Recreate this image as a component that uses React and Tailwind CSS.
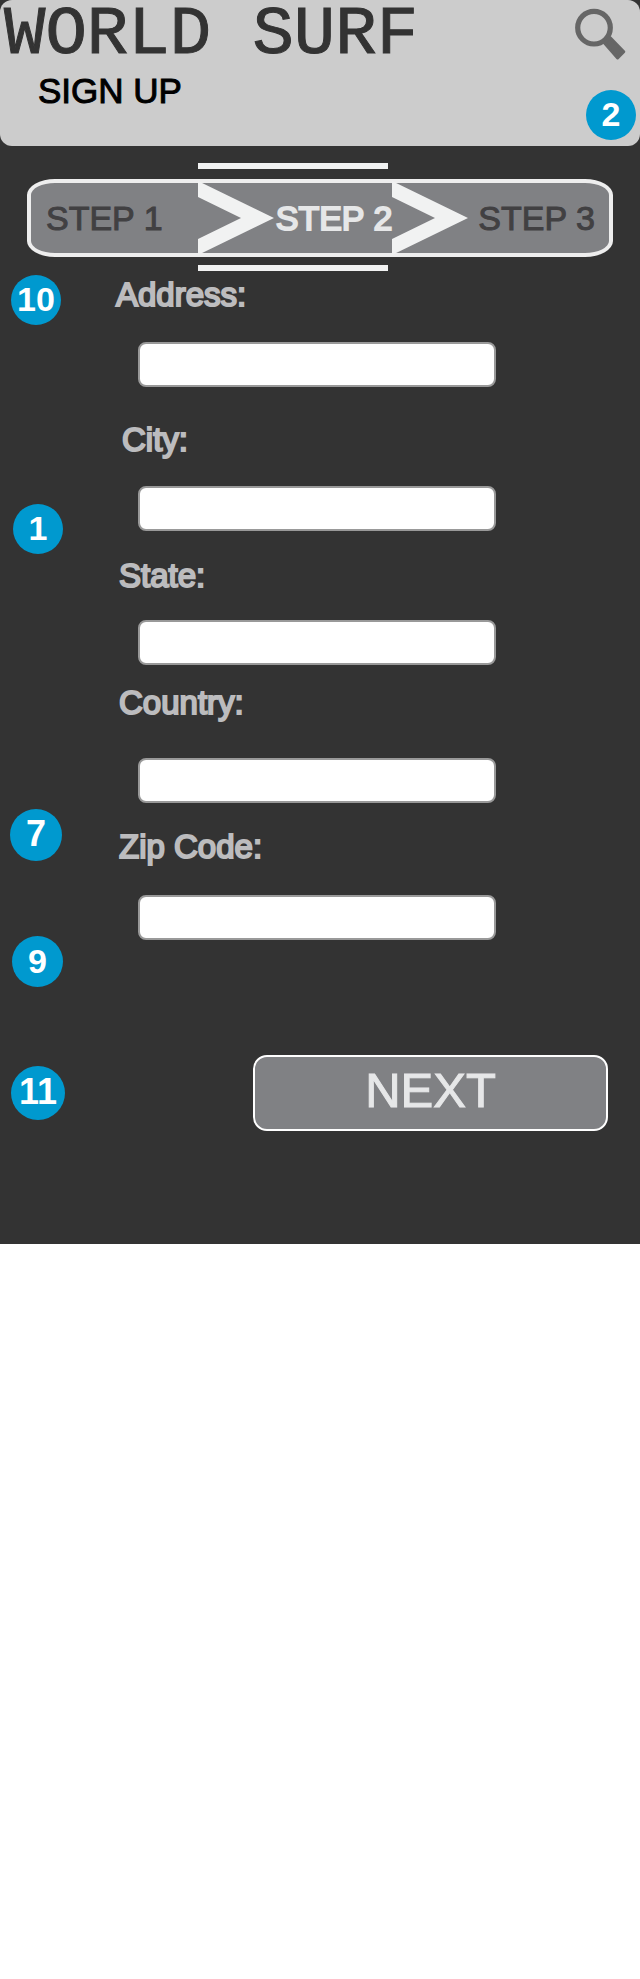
import React from "react";

const steps = "grid grid-cols-[167fr_194fr_217fr]";

const fields = [
  { id: "address", label: "Address:", box: "mt-1.5", text: "pl-[50px]", gap: "mt-[29px]" },
  { id: "city", label: "City:", box: "mt-[35px]", text: "pl-[56px]", gap: "mt-7" },
  { id: "state", label: "State:", box: "mt-[27px]", text: "pl-[53px]", gap: "mt-[26px]" },
  { id: "country", label: "Country:", box: "mt-5", text: "pl-[53px]", gap: "mt-[37px]" },
  { id: "zip", label: "Zip Code:", box: "mt-[26px]", text: "pl-[53px]", gap: "mt-[30px]" },
];

const notes = [
  { n: "10", cls: "mt-1 ml-[11px] size-[50px] text-[34px]" },
  { n: "1", cls: "mt-[179px] ml-[13px] size-[50px] text-[34px]" },
  { n: "7", cls: "mt-[255px] ml-[10px] size-[52px] text-[36px]" },
  { n: "9", cls: "mt-[75px] ml-3 size-[51px] text-[34px]" },
  { n: "11", cls: "mt-[79px] ml-[11px] size-[54px] text-[36px]" },
];

function Note({ n, className }) {
  return (
    <span
      className={`flex shrink-0 items-center justify-center rounded-full bg-[#0099cf] pb-0.5 leading-none font-bold text-white ${className}`}
    >
      {n}
    </span>
  );
}

function Chevron() {
  return (
    <svg className="h-[74px] w-[76px] shrink-0" viewBox="0 0 76 74" aria-hidden="true">
      <polygon points="0,0 76,37 0,74 0,58 43,37 0,16" fill="#f1f2f2" />
    </svg>
  );
}

function SearchIcon() {
  return (
    <svg className="block size-[54px]" viewBox="0 0 54 54" fill="none" stroke="#666" aria-hidden="true">
      <circle cx="20" cy="19.7" r="16.3" strokeWidth="5.2" />
      <path
        d="M30.5 35 L36 29.5 L49.8 43.7 L43.6 50 Z"
        fill="#666"
        strokeWidth="3"
        strokeLinejoin="round"
      />
    </svg>
  );
}

export default function App() {
  return (
    <div className="min-h-screen bg-white font-['Liberation_Sans',Arial,sans-serif]">
      <div className="bg-[#333] pb-[113px]">
        <header className="flex h-[146px] justify-between rounded-xl bg-[#ccc]">
          <div>
            <h1 className="pl-1 font-['Liberation_Mono',monospace] text-[69px] leading-[70px] whitespace-nowrap text-[#333] [-webkit-text-stroke:1px_#333]">
              WORLD SURF
            </h1>
            <h2 className="pl-[38px] text-[35px] leading-[42px] text-black [-webkit-text-stroke:1px_black]">
              SIGN UP
            </h2>
          </div>
          <div className="flex flex-col items-end justify-between pt-2 pr-1 pb-1.5">
            <button type="button" aria-label="Search" className="mr-2">
              <SearchIcon />
            </button>
            <Note n="2" className="size-[50px] text-[34px]" />
          </div>
        </header>

        <nav aria-label="Progress" className="pt-[17px] pr-[27px] pl-[27px]">
          <div className={`${steps} px-1`}>
            <div className="col-start-2 mr-1 h-1.5 bg-[#f1f2f2]" />
          </div>
          <ol
            className={`${steps} mt-2.5 h-[78px] content-center items-center rounded-[28px_/_16px] border-4 border-[#eee] bg-[#808184] text-[34px] leading-10 whitespace-nowrap`}
          >
            <li className="pl-[15px] text-[#414042] [-webkit-text-stroke:1px_#414042]">STEP 1</li>
            <li
              aria-current="step"
              className="flex items-center gap-0.5 text-[#e6e7e8] [-webkit-text-stroke:2px_#e6e7e8]"
            >
              <Chevron />
              <span>STEP 2</span>
            </li>
            <li className="flex items-center gap-2.5 text-[#414042] [-webkit-text-stroke:1px_#414042]">
              <Chevron />
              <span>STEP 3</span>
            </li>
          </ol>
          <div className={`${steps} mt-2 px-1`}>
            <div className="col-start-2 mr-1 h-1.5 bg-[#f1f2f2]" />
          </div>
        </nav>

        <div className="flex">
          <aside className="flex w-[66px] shrink-0 flex-col">
            {notes.map((x) => (
              <Note key={x.n} n={x.n} className={x.cls} />
            ))}
          </aside>
          <form className="flex min-w-0 grow flex-col" onSubmit={(e) => e.preventDefault()}>
            {fields.map((f) => (
              <div key={f.id} className={f.box}>
                <label
                  htmlFor={f.id}
                  className={`block text-[33px] leading-9 text-[#bcbcbe] [-webkit-text-stroke:2px_#bcbcbe] ${f.text}`}
                >
                  {f.label}
                </label>
                <div className={`pr-36 pl-[72px] ${f.gap}`}>
                  <input
                    id={f.id}
                    type="text"
                    className="block h-[45px] w-full rounded-lg border-2 border-[#999] bg-white px-3 text-2xl text-[#333]"
                  />
                </div>
              </div>
            ))}
            <button
              type="submit"
              className="mt-[115px] mr-8 ml-[187px] flex h-[76px] items-center justify-center rounded-[14px] border-2 border-white bg-[#808184] pb-1.5 text-[49px] leading-none text-[#e6e7e8] [-webkit-text-stroke:1px_#e6e7e8]"
            >
              NEXT
            </button>
          </form>
        </div>
      </div>
    </div>
  );
}
